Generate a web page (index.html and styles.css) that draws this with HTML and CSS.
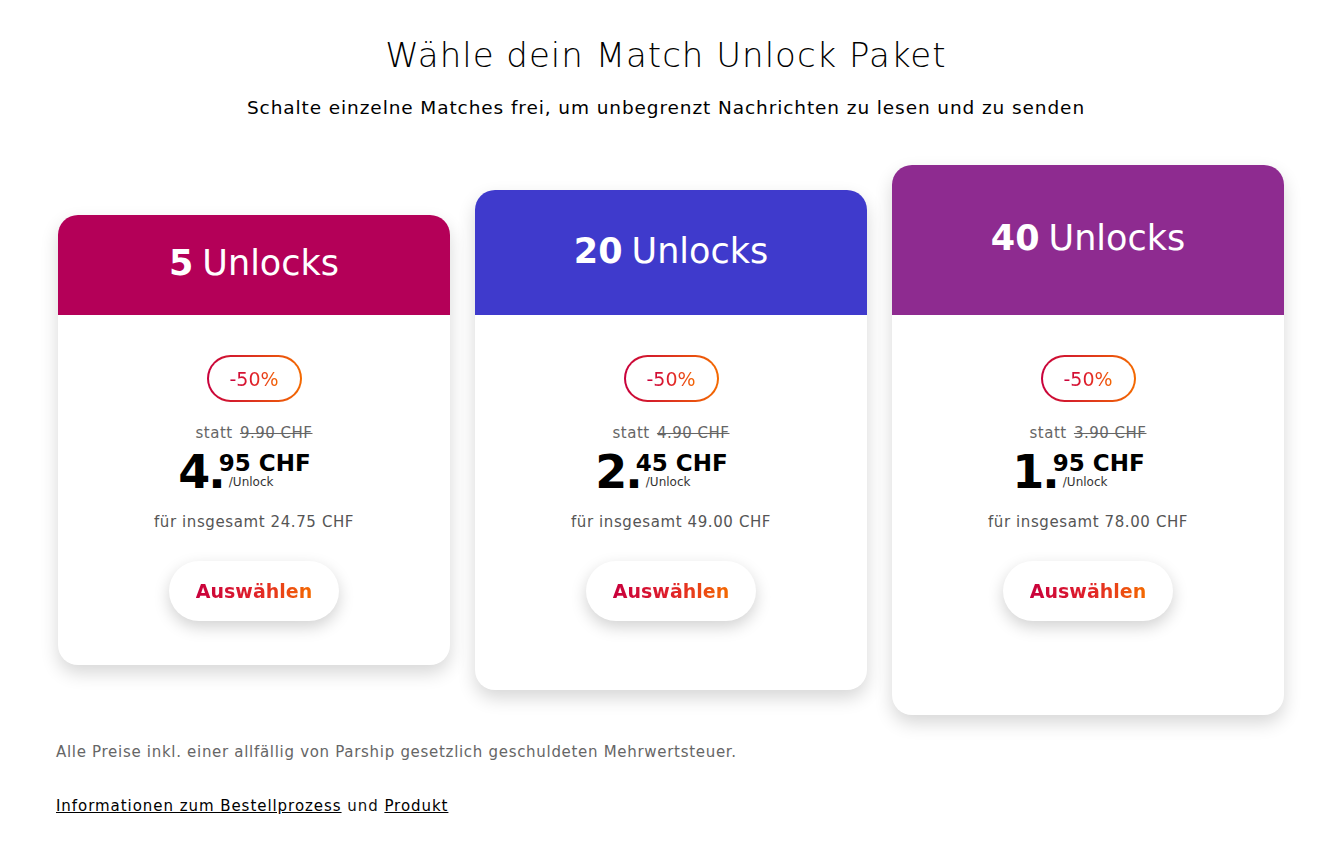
FILE: index.html
```html
<!DOCTYPE html>
<html lang="de">
<head>
<meta charset="utf-8">
<title>Match Unlock Paket</title>
<link rel="stylesheet" href="styles.css">
</head>
<body>
<main class="page">
  <header class="intro">
    <h1 class="title">Wähle dein Match Unlock Paket</h1>
    <p class="subtitle">Schalte einzelne Matches frei, um unbegrenzt Nachrichten zu lesen und zu senden</p>
  </header>

  <section class="plans">
    <article class="plan plan-small">
      <div class="plan-head"><span class="plan-count">5</span> Unlocks</div>
      <div class="plan-body">
        <span class="badge"><span class="grad-text">-50%</span></span>
        <p class="old-price">statt <s>9.90 CHF</s></p>
        <div class="price">
          <span class="price-int">4</span><span class="price-dot">.</span>
          <span class="price-rest">
            <span class="price-frac">95 CHF</span>
            <span class="price-unit">/Unlock</span>
          </span>
        </div>
        <p class="total">für insgesamt 24.75 CHF</p>
        <button class="select"><span class="grad-text">Auswählen</span></button>
      </div>
    </article>

    <article class="plan plan-medium">
      <div class="plan-head"><span class="plan-count">20</span> Unlocks</div>
      <div class="plan-body">
        <span class="badge"><span class="grad-text">-50%</span></span>
        <p class="old-price">statt <s>4.90 CHF</s></p>
        <div class="price">
          <span class="price-int">2</span><span class="price-dot">.</span>
          <span class="price-rest">
            <span class="price-frac">45 CHF</span>
            <span class="price-unit">/Unlock</span>
          </span>
        </div>
        <p class="total">für insgesamt 49.00 CHF</p>
        <button class="select"><span class="grad-text">Auswählen</span></button>
      </div>
    </article>

    <article class="plan plan-large">
      <div class="plan-head"><span class="plan-count">40</span> Unlocks</div>
      <div class="plan-body">
        <span class="badge"><span class="grad-text">-50%</span></span>
        <p class="old-price">statt <s>3.90 CHF</s></p>
        <div class="price">
          <span class="price-int">1</span><span class="price-dot">.</span>
          <span class="price-rest">
            <span class="price-frac">95 CHF</span>
            <span class="price-unit">/Unlock</span>
          </span>
        </div>
        <p class="total">für insgesamt 78.00 CHF</p>
        <button class="select"><span class="grad-text">Auswählen</span></button>
      </div>
    </article>
  </section>

  <footer class="notes">
    <p class="vat">Alle Preise inkl. einer allfällig von Parship gesetzlich geschuldeten Mehrwertsteuer.</p>
    <p class="links"><a href="#">Informationen zum Bestellprozess</a> und <a href="#">Produkt</a></p>
  </footer>
</main>
</body>
</html>
```

FILE: styles.css
```css
* {
  box-sizing: border-box;
}

body {
  margin: 0;
  background: #ffffff;
  color: #000000;
  font-family: "DejaVu Sans", "Noto Sans", "Liberation Sans", sans-serif;
}

.page {
  width: 1332px;
  padding-top: 34px;
}

/* heading */
.intro {
  text-align: center;
}

.title {
  margin: 0;
  font-size: 34px;
  font-weight: 300;
  line-height: 42px;
  letter-spacing: 1px;
}

.subtitle {
  margin: 20px 0 0;
  font-size: 18.5px;
  font-weight: 400;
  line-height: 24px;
  letter-spacing: 0.9px;
}

/* plan cards */
.plans {
  display: flex;
  align-items: center;
  gap: 25px;
  margin: 45px 0 0 58px;
  height: 550px;
}

.plan {
  width: 392px;
  border-radius: 20px;
  background: #ffffff;
  box-shadow: 0 8px 18px rgba(0, 0, 0, 0.16);
  overflow: hidden;
}

.plan-head {
  display: flex;
  align-items: center;
  justify-content: center;
  padding-bottom: 4px;
  color: #ffffff;
  font-size: 35px;
  font-weight: 400;
}

.plan-count {
  font-weight: 700;
  margin-right: 9px;
}

.plan-small .plan-head {
  height: 100px;
  background: #b40058;
}

.plan-medium .plan-head {
  height: 125px;
  background: #3f3acc;
}

.plan-large .plan-head {
  height: 150px;
  background: #8e2b90;
}

.plan-body {
  display: flex;
  flex-direction: column;
  align-items: center;
  padding-top: 40px;
}

.plan-small .plan-body { height: 350px; }
.plan-medium .plan-body { height: 375px; }
.plan-large .plan-body { height: 400px; }

.grad-text {
  background: linear-gradient(90deg, #c8003c 0%, #e0202a 50%, #f46a00 100%);
  -webkit-background-clip: text;
  background-clip: text;
  color: transparent;
}

.badge {
  display: flex;
  align-items: center;
  justify-content: center;
  width: 95px;
  height: 47px;
  border-radius: 24px;
  border: 2px solid transparent;
  background:
    linear-gradient(#ffffff, #ffffff) padding-box,
    linear-gradient(90deg, #c8003c, #f46a00) border-box;
  font-size: 19px;
  font-weight: 400;
}

.old-price {
  margin: 21px 0 0;
  font-size: 15px;
  line-height: 20px;
  color: #666666;
  letter-spacing: 0.5px;
}

.old-price s {
  margin-left: 2px;
}

/* big integer, tight dot, then cents over the unit label */
.price {
  display: flex;
  align-items: flex-start;
  justify-content: center;
  align-self: stretch;
  margin-top: 6px;
  padding-right: 19px;
  height: 46px;
  font-weight: 700;
}

.price-int,
.price-dot {
  font-size: 46px;
  line-height: 46px;
}

.price-int {
  letter-spacing: -2px;
}

.price-dot {
  letter-spacing: -7px;
}

.price-rest {
  display: flex;
  flex-direction: column;
  margin-top: 2.7px;
}

.price-frac {
  font-size: 23px;
  line-height: 23px;
}

.price-unit {
  margin: 0 0 0 10px;
  font-size: 12px;
  font-weight: 400;
  line-height: 14px;
  color: #333333;
}

.total {
  margin: 17px 0 0;
  font-size: 15px;
  line-height: 20px;
  color: #555555;
  letter-spacing: 0.6px;
}

.select {
  margin-top: 29px;
  width: 170px;
  height: 60px;
  border: none;
  border-radius: 30px;
  background: #ffffff;
  box-shadow: 0 6px 16px rgba(0, 0, 0, 0.18);
  font-family: inherit;
  font-size: 19px;
  font-weight: 700;
  cursor: pointer;
}

/* footer notes */
.notes {
  padding-left: 56px;
  margin-top: 26px;
}

.vat {
  margin: 0;
  font-size: 15px;
  line-height: 22px;
  color: #666666;
  letter-spacing: 0.7px;
}

.links {
  margin: 32px 0 0;
  font-size: 15px;
  line-height: 22px;
  color: #111111;
  letter-spacing: 0.95px;
}

.links a {
  color: #000000;
  text-decoration: underline;
}
```
